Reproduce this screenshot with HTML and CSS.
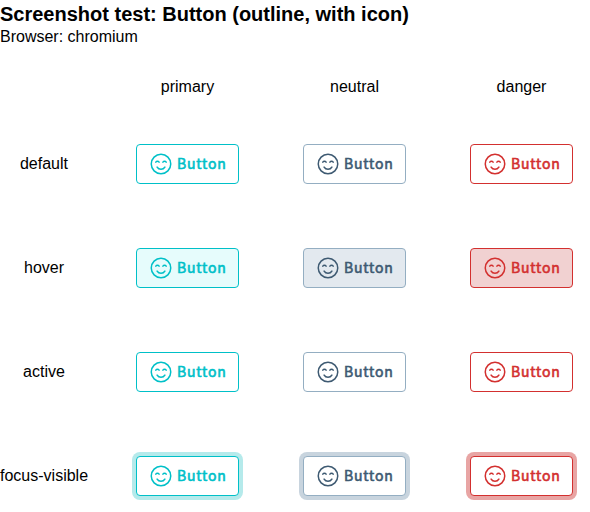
FILE: index.html
```html
<!DOCTYPE html>
<html lang="en">
<head>
<meta charset="utf-8">
<title>Button (outline, with icon)</title>
<link rel="stylesheet" href="styles.css">
</head>
<body>
<svg class="defs"><symbol id="smile" viewBox="0 0 24 24"><g fill="none" stroke="currentColor" stroke-width="1.5" stroke-linecap="round"><circle cx="12" cy="12" r="9.75"/><path d="M6.8 10.2a2 2 0 0 1 3.3 0M13.9 10.2a2 2 0 0 1 3.3 0M8.1 15.1a4.6 4.6 0 0 0 7.8 0"/></g></symbol></svg>
<h1>Screenshot test: Button (outline, with icon)</h1>
<p>Browser: chromium</p>
<main class="grid">
<span class="label"></span><span class="heading">primary</span><span class="heading">neutral</span><span class="heading">danger</span>
<span class="label">default</span>
<button class="btn primary"><svg><use href="#smile"/></svg>Button</button>
<button class="btn neutral"><svg><use href="#smile"/></svg>Button</button>
<button class="btn danger"><svg><use href="#smile"/></svg>Button</button>
<span class="label">hover</span>
<button class="btn primary hover"><svg><use href="#smile"/></svg>Button</button>
<button class="btn neutral hover"><svg><use href="#smile"/></svg>Button</button>
<button class="btn danger hover"><svg><use href="#smile"/></svg>Button</button>
<span class="label">active</span>
<button class="btn primary"><svg><use href="#smile"/></svg>Button</button>
<button class="btn neutral"><svg><use href="#smile"/></svg>Button</button>
<button class="btn danger"><svg><use href="#smile"/></svg>Button</button>
<span class="label">focus-visible</span>
<button class="btn primary focus"><svg><use href="#smile"/></svg>Button</button>
<button class="btn neutral focus"><svg><use href="#smile"/></svg>Button</button>
<button class="btn danger focus"><svg><use href="#smile"/></svg>Button</button>
</main>
</body>
</html>
```
FILE: styles.css
```css
* { box-sizing: border-box; }
body { margin: 0; padding-top: 2px; font: 16px/24px "Liberation Sans", sans-serif; color: #000; overflow: hidden; }
.defs { display: none; }
h1 { margin: 0; font-size: 20px; line-height: 24px; }
p { margin: 0; line-height: 22px; }
.grid { display: grid; grid-template: 50px repeat(4, 104px) / 72px repeat(3, 103px); column-gap: 64px; margin-top: 14px; align-items: center; white-space: nowrap; }
.label { width: 88px; text-align: center; }
.heading { text-align: center; }
.btn { width: 103px; height: 40px; padding: 0 0 2px 12px; display: flex; align-items: center; gap: 4px; border: 1px solid; border-radius: 4px; background: #fff; font: 400 14px/24px "Noto Sans CJK SC", sans-serif; letter-spacing: 0.8px; -webkit-text-stroke: 0.6px currentColor; }
.btn svg { width: 24px; height: 24px; margin-top: 2px; flex: none; -webkit-text-stroke: 0; }
.primary { color: #00c0c8; }
.neutral { color: #3e5a72; border-color: #94aec2; }
.danger { color: #d3302f; }
.primary.hover { background: #e6fcfc; }
.neutral.hover { background: #e3e9ef; }
.danger.hover { background: #f1d1d1; }
.primary.focus { box-shadow: 0 0 0 4px #b5eaeb; }
.neutral.focus { box-shadow: 0 0 0 4px #c8d4de; }
.danger.focus { box-shadow: 0 0 0 4px #e8a5a4; }
```
